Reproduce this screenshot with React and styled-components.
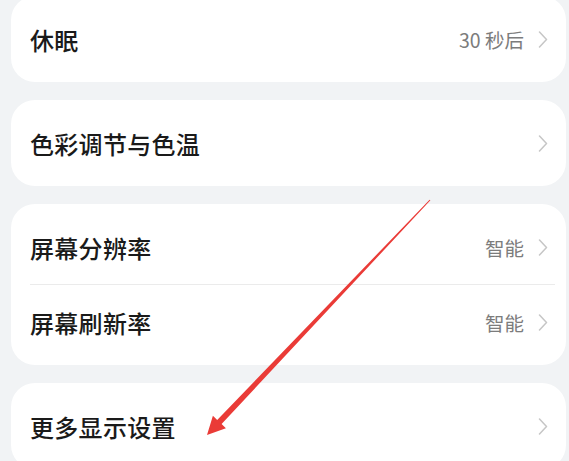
import React from "react";
import styled, { createGlobalStyle } from "styled-components";

const GlobalStyle = createGlobalStyle`
  html, body {
    margin: 0;
    padding: 0;
    background: #f1f3f5;
    overflow: hidden;
  }
  body {
    font-family: "Noto Sans CJK SC", "Noto Sans", sans-serif;
  }
`;

const Page = styled.div`
  position: relative;
  width: 569px;
  height: 461px;
  overflow: hidden;
  background: #f1f3f5;
`;

const List = styled.div`
  display: flex;
  flex-direction: column;
  gap: 18px;
  margin-top: -4px;
  padding: 0 3px 0 11px;
`;

const Card = styled.section`
  display: flex;
  flex-direction: column;
  background: #ffffff;
  border-radius: 24px;
  padding: 6px 0;
`;

const Row = styled.div`
  display: flex;
  align-items: center;
  height: 74px;
  padding: 0 18px 0 19px;
`;

const Label = styled.span`
  flex: 1;
  font-size: 24px;
  font-weight: 500;
  color: #1a1a1a;
  letter-spacing: 0.3px;
`;

const Value = styled.span`
  font-size: 19.5px;
  color: #7c7c7c;
  margin-right: 14px;
`;

const Divider = styled.div`
  height: 1px;
  background: #ebebeb;
  margin: 0 11px 0 19px;
`;

const Overlay = styled.svg`
  position: absolute;
  inset: 0;
  pointer-events: none;
`;

const Chevron = () => (
  <svg width="10" height="17" viewBox="0 0 10 17" fill="none">
    <path d="M1.5 1 L8.5 8.5 L1.5 16" stroke="#c6c6c6" strokeWidth="1.5" strokeLinecap="round" strokeLinejoin="round" />
  </svg>
);

const SettingRow = ({ label, value }) => (
  <Row>
    <Label>{label}</Label>
    {value && <Value>{value}</Value>}
    <Chevron />
  </Row>
);

const groups = [
  [{ label: "休眠", value: "30 秒后" }],
  [{ label: "色彩调节与色温" }],
  [
    { label: "屏幕分辨率", value: "智能" },
    { label: "屏幕刷新率", value: "智能" },
  ],
  [{ label: "更多显示设置" }],
];

export default function App() {
  return (
    <Page>
      <GlobalStyle />
      <List>
        {groups.map((rows, gi) => (
          <Card key={gi}>
            {rows.map((r, ri) => (
              <React.Fragment key={r.label}>
                {ri > 0 && <Divider />}
                <SettingRow {...r} />
              </React.Fragment>
            ))}
          </Card>
        ))}
      </List>
      {/* annotation arrow pointing at the last row */}
      <Overlay width="569" height="461" viewBox="0 0 569 461">
        <polygon
          points="430.4,200.3 429.6,199.7 217.2,419.9 212.9,415.8 207,435 225.9,428.2 221.6,424.1"
          fill="#ea3b37"
        />
      </Overlay>
    </Page>
  );
}
